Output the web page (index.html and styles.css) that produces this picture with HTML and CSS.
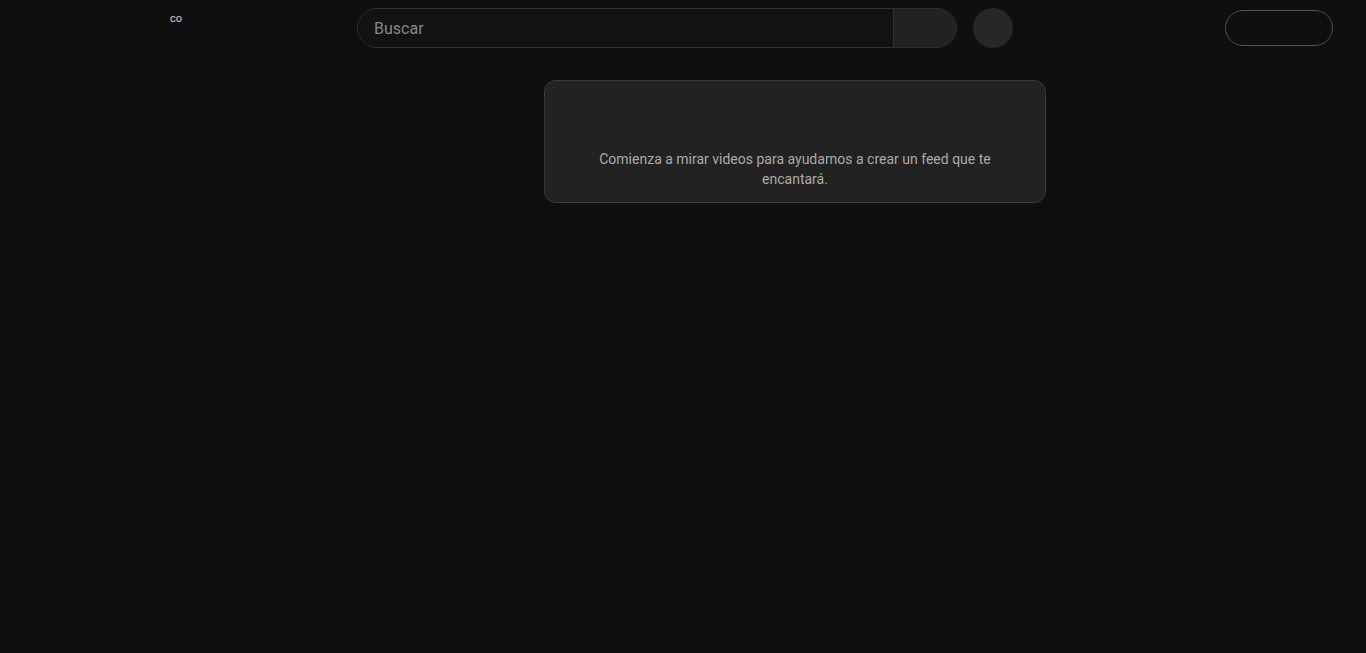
FILE: index.html
```html
<!DOCTYPE html>
<html lang="es">
<head>
<meta charset="utf-8">
<title>YouTube</title>
<link rel="stylesheet" href="styles.css">
</head>
<body>
<header class="masthead">
  <div class="start"><span class="logo-text">co</span></div>
  <div class="search">
    <div class="search-input">Buscar</div>
    <div class="search-btn"></div>
  </div>
  <div class="mic"></div>
  <div class="spacer"></div>
  <div class="signin"></div>
</header>
<main class="content">
  <div class="feed-card">
    <p class="feed-text">Comienza a mirar videos para ayudarnos a crear un feed que te encantará.</p>
  </div>
</main>
</body>
</html>
```

FILE: styles.css
```css
html, body {
  margin: 0;
  padding: 0;
  background: #0f0f0f;
  height: 100%;
}
body {
  font-family: Roboto, "Liberation Sans", Arial, sans-serif;
  color: #f1f1f1;
}
.masthead {
  display: flex;
  align-items: flex-start;
  height: 56px;
}
.start {
  width: 357px;
  flex: none;
  box-sizing: border-box;
  padding-left: 170px;
  padding-top: 12px;
}
.logo-text {
  font-size: 11px;
  line-height: 13px;
  color: #d0d0d0;
  display: block;
}
.search {
  margin-top: 8px;
  width: 600px;
  height: 40px;
  display: flex;
  box-sizing: border-box;
  border: 1px solid #303030;
  border-radius: 20px;
  overflow: hidden;
}
.search-input {
  flex: 1;
  background: #121212;
  padding-left: 16px;
  padding-top: 1px;
  font-size: 16px;
  line-height: 38px;
  color: #888888;
}
.search-btn {
  width: 62px;
  background: #222222;
  border-left: 1px solid #303030;
}
.mic {
  margin-top: 8px;
  margin-left: 16px;
  width: 40px;
  height: 40px;
  border-radius: 50%;
  background: #272727;
}
.spacer {
  flex: 1;
}
.signin {
  margin-top: 10px;
  margin-right: 33px;
  width: 108px;
  height: 36px;
  box-sizing: border-box;
  border: 1px solid #505050;
  border-radius: 18px;
}
.content {
  padding-top: 24px;
  padding-left: 544px;
}
.feed-card {
  width: 502px;
  height: 123px;
  box-sizing: border-box;
  background: #222222;
  border: 1px solid #3a3a3a;
  border-radius: 12px;
  padding: 68px 24px 0;
}
.feed-text {
  margin: 0;
  font-size: 14px;
  line-height: 20px;
  color: #aaaaaa;
  text-align: center;
}
```
